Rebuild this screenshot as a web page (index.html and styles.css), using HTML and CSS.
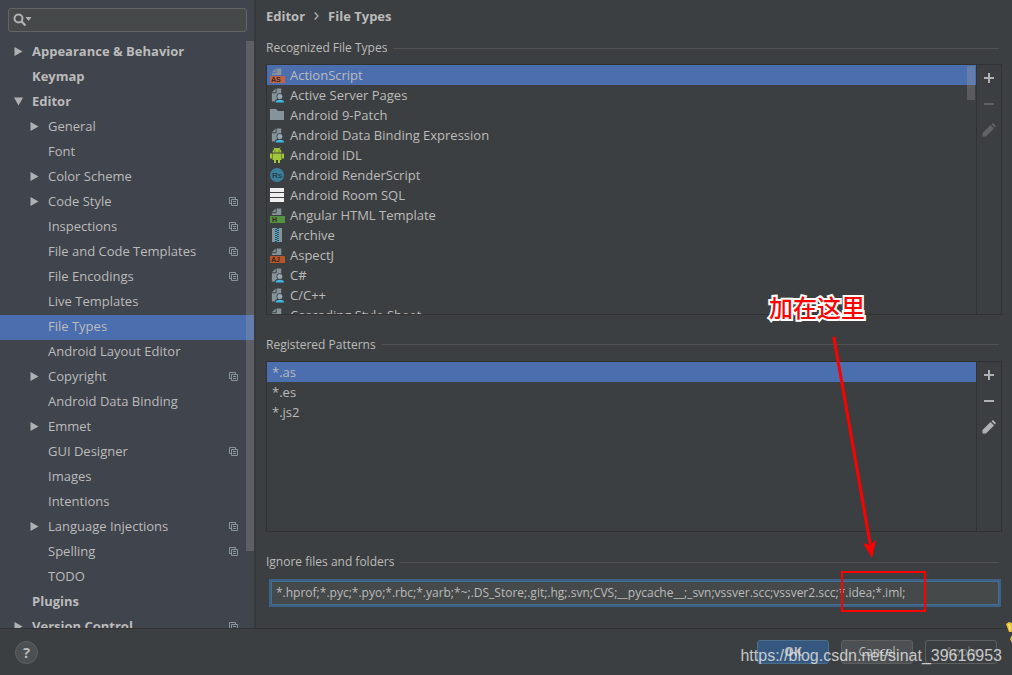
FILE: index.html
```html
<!DOCTYPE html>
<html lang="en">
<head>
<meta charset="utf-8">
<title>Settings</title>
<link rel="stylesheet" href="styles.css">
</head>
<body>
<svg class="sprite" aria-hidden="true">
  <symbol id="i-right" viewBox="0 0 8 9"><path d="M0 0v9l8-4.500z" fill="#afb1b3"/></symbol>
  <symbol id="i-down" viewBox="0 0 9 8"><path d="M0 0h9L4.500 8z" fill="#afb1b3"/></symbol>
  <symbol id="i-copy" viewBox="0 0 9 9"><path d="M.5 6.500v-6h6M.5 6.500h2M6.500.500v2M2.500 2.500h6v6h-6zM4 4.500h3M4 6.500h3" fill="none" stroke="#8a949d"/></symbol>
  <symbol id="i-doc" viewBox="0 0 16 16"><path d="M7 1h5v7H2V6h5zM6 1v4H2z" fill="#87939a"/></symbol>
  <symbol id="i-user" viewBox="0 0 16 16"><path d="M7 1h5v14H2V6h5zM6 1v4H2z" fill="#87939a"/><circle cx="10.500" cy="9.500" r="3.500" fill="#3c3f41"/><path d="M5 16c0-3 2-4 5.500-4s5.500 1 5.500 4z" fill="#3c3f41"/><circle cx="10.500" cy="9.500" r="2.700" fill="#9aa7b0"/><path d="M6 16c0-2 1.500-3 4.500-3s4.500 1 4.500 3z" fill="#40b6e0"/></symbol>
  <symbol id="i-plus" viewBox="0 0 10 10"><path d="M5 0v10M0 5h10" stroke="#afb1b3" stroke-width="2"/></symbol>
  <symbol id="i-minus" viewBox="0 0 10 10"><path d="M0 5h10" stroke="currentColor" stroke-width="2"/></symbol>
  <symbol id="i-pen" viewBox="0 0 14 14"><path d="M.5 13.500v-3.500L8.500 2l3.500 3.500-8 8zM9.500 1.300L11 0l3 3-1.300 1.500z" fill="currentColor"/></symbol>
</svg>
<div class="window">
  <div class="main">
    <nav class="sidebar">
      <div class="search">
        <svg width="19" height="14" viewBox="0 0 19 14" aria-hidden="true"><circle cx="5.500" cy="5.500" r="4" fill="none" stroke="#afb1b3" stroke-width="2"/><path d="M8.500 8.500l4 4" stroke="#afb1b3" stroke-width="2.400"/><path d="M12.500 4h6l-3 4z" fill="#afb1b3"/></svg>
        <input type="text" aria-label="Search settings">
      </div>
      <ul class="tree">
        <li class="top"><svg class="arrow"><use href="#i-right"/></svg><span>Appearance &amp; Behavior</span></li>
        <li class="top"><i class="arrow"></i><span>Keymap</span></li>
        <li class="top"><svg class="arrow"><use href="#i-down"/></svg><span>Editor</span></li>
        <li><svg class="arrow"><use href="#i-right"/></svg><span>General</span></li>
        <li><i class="arrow"></i><span>Font</span></li>
        <li><svg class="arrow"><use href="#i-right"/></svg><span>Color Scheme</span></li>
        <li><svg class="arrow"><use href="#i-right"/></svg><span>Code Style</span><svg class="copy"><use href="#i-copy"/></svg></li>
        <li><i class="arrow"></i><span>Inspections</span><svg class="copy"><use href="#i-copy"/></svg></li>
        <li><i class="arrow"></i><span>File and Code Templates</span><svg class="copy"><use href="#i-copy"/></svg></li>
        <li><i class="arrow"></i><span>File Encodings</span><svg class="copy"><use href="#i-copy"/></svg></li>
        <li><i class="arrow"></i><span>Live Templates</span></li>
        <li class="selected"><i class="arrow"></i><span>File Types</span></li>
        <li><i class="arrow"></i><span>Android Layout Editor</span></li>
        <li><svg class="arrow"><use href="#i-right"/></svg><span>Copyright</span><svg class="copy"><use href="#i-copy"/></svg></li>
        <li><i class="arrow"></i><span>Android Data Binding</span></li>
        <li><svg class="arrow"><use href="#i-right"/></svg><span>Emmet</span></li>
        <li><i class="arrow"></i><span>GUI Designer</span><svg class="copy"><use href="#i-copy"/></svg></li>
        <li><i class="arrow"></i><span>Images</span></li>
        <li><i class="arrow"></i><span>Intentions</span></li>
        <li><svg class="arrow"><use href="#i-right"/></svg><span>Language Injections</span><svg class="copy"><use href="#i-copy"/></svg></li>
        <li><i class="arrow"></i><span>Spelling</span><svg class="copy"><use href="#i-copy"/></svg></li>
        <li><i class="arrow"></i><span>TODO</span></li>
        <li class="top"><i class="arrow"></i><span>Plugins</span></li>
        <li class="top"><svg class="arrow"><use href="#i-right"/></svg><span>Version Control</span><svg class="copy"><use href="#i-copy"/></svg></li>
      </ul>
      <div class="tree-thumb"></div>
    </nav>
    <main class="content">
      <h1 class="crumbs"><span>Editor</span><svg width="5" height="8" viewBox="0 0 5 8" aria-hidden="true"><path d="M.7.500L4 4 .7 7.500" fill="none" stroke="#afb1b3" stroke-width="1.300"/></svg><span>File Types</span></h1>
      <h2 class="group first">Recognized File Types</h2>
      <section class="box types">
        <ul class="list">
          <li class="selected"><svg class="ico"><use href="#i-doc"/><rect y="9" width="15" height="7" fill="#bf6446"/><text class="tag" x="1" y="15">AS</text></svg><span>ActionScript</span></li>
          <li><svg class="ico"><use href="#i-user"/></svg><span>Active Server Pages</span></li>
          <li><svg class="ico"><path d="M0 2h6l2 2h6v9H0z" fill="#87939a"/></svg><span>Android 9-Patch</span></li>
          <li><svg class="ico"><use href="#i-user"/></svg><span>Android Data Binding Expression</span></li>
          <li><svg class="ico"><path d="M2.500 5.500a4.500 4.500 0 0 1 9 0zM2.500 6.500h9V13h-9zM0 6.500h2v5H0zM12 6.500h2v5h-2zM4 13h2v3H4zM8 13h2v3H8z" fill="#a4c639"/><path d="M4 .500l1.300 2M10 .500l-1.300 2" stroke="#a4c639"/><path d="M4.500 3.500h1v1h-1zM8.500 3.500h1v1h-1z" fill="#3c3f41"/></svg><span>Android IDL</span></li>
          <li><svg class="ico"><circle cx="7" cy="8" r="7" fill="#3b7f9b"/><text class="tag rs" x="2" y="11">Rs</text></svg><span>Android RenderScript</span></li>
          <li><svg class="ico"><path d="M0 1h14v4H0zM0 6h14v4H0zM0 11h14v4H0z" fill="#eee"/></svg><span>Android Room SQL</span></li>
          <li><svg class="ico"><use href="#i-doc"/><rect y="9" width="15" height="7" fill="#549142"/><text class="tag" x="2" y="15">H</text></svg><span>Angular HTML Template</span></li>
          <li><svg class="ico"><path d="M2 1h3v14H2zM9 1h3v14H9z" fill="#87939a"/><path d="M6 1v14" stroke="#40b6e0" stroke-width="2" stroke-dasharray="1 1"/><path d="M8 2v13" stroke="#40b6e0" stroke-width="2" stroke-dasharray="1 1"/></svg><span>Archive</span></li>
          <li><svg class="ico"><use href="#i-doc"/><rect y="9" width="15" height="7" fill="#b8562b"/><text class="tag" x="1" y="15">AJ</text></svg><span>AspectJ</span></li>
          <li><svg class="ico"><use href="#i-user"/></svg><span>C#</span></li>
          <li><svg class="ico"><use href="#i-user"/></svg><span>C/C++</span></li>
          <li><svg class="ico"><use href="#i-doc"/></svg><span>Cascading Style Sheet</span></li>
        </ul>
        <div class="list-thumb"></div>
        <div class="tools">
          <button aria-label="Add file type"><svg width="10" height="10"><use href="#i-plus"/></svg></button>
          <button aria-label="Remove file type" disabled><svg width="10" height="10"><use href="#i-minus"/></svg></button>
          <button aria-label="Edit file type" disabled><svg width="14" height="14"><use href="#i-pen"/></svg></button>
        </div>
      </section>
      <h2 class="group">Registered Patterns</h2>
      <section class="box patterns">
        <ul class="list">
          <li class="selected"><span>*.as</span></li>
          <li><span>*.es</span></li>
          <li><span>*.js2</span></li>
        </ul>
        <div class="tools">
          <button aria-label="Add pattern"><svg width="10" height="10"><use href="#i-plus"/></svg></button>
          <button aria-label="Remove pattern"><svg width="10" height="10"><use href="#i-minus"/></svg></button>
          <button aria-label="Edit pattern"><svg width="14" height="14"><use href="#i-pen"/></svg></button>
        </div>
      </section>
      <label class="group" for="ignore">Ignore files and folders</label>
      <input class="ignore" id="ignore" type="text" value="*.hprof;*.pyc;*.pyo;*.rbc;*.yarb;*~;.DS_Store;.git;.hg;.svn;CVS;__pycache__;_svn;vssver.scc;vssver2.scc;*.idea;*.iml;">
    </main>
  </div>
  <footer class="footer">
    <button class="help" aria-label="Help">?</button>
    <button class="btn primary">OK</button>
    <button class="btn">Cancel</button>
    <button class="btn" disabled>Apply</button>
  </footer>
  <div class="note">加在这里</div>
  <svg class="pointer" width="50" height="226" viewBox="0 0 50 226" aria-hidden="true"><path d="M4 3L40 208" stroke="#f00" stroke-width="3" stroke-linecap="round"/><path d="M33 208l7 2 6-5-4 18z" fill="#f00"/></svg>
  <div class="marker"></div>
  <svg class="hand" width="6" height="24" viewBox="0 0 6 24" aria-hidden="true"><path d="M0 2l3-2 3 1v9H3z" fill="#e8c23c"/><path d="M2 2l2 2v4" stroke="#fff3a0" fill="none"/><path d="M6 13l-2 4 2 4z" fill="#e8c23c"/></svg>
  <div class="watermark">https://blog.csdn.net/sinat_39616953</div>
</div>
</body>
</html>
```
FILE: styles.css
```css
* { box-sizing: border-box; }
body {
  margin: 0;
  background: #3c3f41;
  color: #bbbbbb;
  font: 13px/20px "Open Sans", "Noto Sans", "Noto Sans CJK SC", sans-serif;
}
ul, h1, h2 { margin: 0; padding: 0; font: inherit; list-style: none; }
button, input { font: inherit; color: inherit; }
.sprite { position: absolute; width: 0; height: 0; }
.window { position: relative; display: flex; flex-direction: column; height: 100vh; overflow: hidden; }
.main { flex: 1; min-height: 0; display: flex; }

.sidebar {
  position: relative;
  width: 256px;
  flex: none;
  display: flex;
  flex-direction: column;
  background: #40444d;
  border-right: 2px solid #37393c;
  padding-top: 8px;
  overflow: hidden;
}
.search {
  flex: none;
  display: flex;
  align-items: center;
  height: 24px;
  margin: 0 7px 8px 8px;
  padding-left: 4px;
  background: #45494a;
  border: 1px solid #646464;
  border-radius: 3px;
}
.search input { flex: 1; min-width: 0; border: 0; background: none; outline: 0; }
.tree { flex: 1; min-height: 0; overflow: hidden; }
.tree li { display: flex; align-items: center; height: 25px; padding: 0 16px 3px 30px; }
.tree .top { padding-left: 14px; font-weight: 700; }
.arrow { width: 9px; height: 9px; margin: 1px 9px 0 0; flex: none; }
.copy { width: 9px; height: 9px; margin: 1px 0 0 auto; }
.selected { background: #4b6eaf; }
.tree-thumb { position: absolute; top: 41px; right: 0; width: 8px; height: 510px; background: rgba(166, 166, 166, 0.28); }

.content { flex: 1; min-width: 0; display: flex; flex-direction: column; padding: 0 10px 21px; }
.crumbs { display: flex; align-items: center; gap: 9px; height: 32px; font-weight: 700; }
.group { display: flex; align-items: center; gap: 6px; height: 32px; margin: 14px 3px 0 0; font-size: 12px; }
.group::after { content: ""; flex: 1; height: 1px; background: #515151; }
.first { margin-top: 0; }
.box { position: relative; display: flex; min-height: 0; border: 1px solid #323232; overflow: hidden; }
.types { flex: 251 1 0; }
.patterns { flex: 171 1 0; }
.list { flex: 1; min-width: 0; overflow: hidden; }
.list li { display: flex; align-items: center; gap: 5px; height: 20px; padding-left: 3px; }
.patterns li { padding-left: 5px; }
.ico { width: 15px; height: 16px; flex: none; }
.ico use { width: 16px; height: 16px; }
.tag { font: 700 7px "Liberation Sans", sans-serif; fill: #3a2620; }
.rs { font-size: 8px; fill: #24434f; }
.list-thumb { position: absolute; top: 1px; right: 26px; width: 8px; height: 34px; background: rgba(166, 166, 166, 0.28); }
.tools { display: flex; flex-direction: column; width: 25px; border-left: 1px solid #323232; }
.tools button { display: grid; place-items: center; height: 26px; padding: 0; border: 0; background: none; color: #afb1b3; }
.tools button:disabled { color: #606263; }
.ignore {
  height: 28px;
  margin: 1px 1px 0 3px;
  padding: 0 5px 2px;
  background: #45494a;
  border: 2px solid #3d6185;
  outline: 1px solid #466d94;
  outline-offset: -3px;
  font-size: 12px;
}

.footer { display: flex; align-items: center; gap: 12px; height: 47px; padding: 0 15px; border-top: 1px solid #323232; }
.help { width: 23px; height: 23px; margin-right: auto; padding: 0; border: 1px solid #5e6264; border-radius: 50%; background: #4c5052; font-size: 15px; font-weight: 700; line-height: 20px; }
.btn { width: 72px; height: 24px; padding: 0; border: 1px solid #5e6060; border-radius: 3px; background: #4c5052; font-size: 12px; line-height: 20px; }
.primary { background: #365880; border-color: #4c708c; font-weight: 700; }
.btn:disabled { background: none; color: #777777; }

/* Annotations drawn over the dialog */
.note {
  position: absolute;
  left: 769px;
  top: 291px;
  color: #f00;
  font: 500 24px/32px "Noto Sans CJK SC", sans-serif;
  -webkit-text-stroke: 4px #fff;
  paint-order: stroke fill;
}
.pointer { position: absolute; left: 830px; top: 335px; }
.marker { position: absolute; left: 841px; top: 571px; width: 85px; height: 41px; border: 2px solid #f00; }
.hand { position: absolute; right: 0; top: 622px; }
.watermark { position: absolute; right: 10px; top: 646px; font: 16px/20px "Liberation Sans", sans-serif; color: rgba(225, 225, 225, 0.85); }
```
